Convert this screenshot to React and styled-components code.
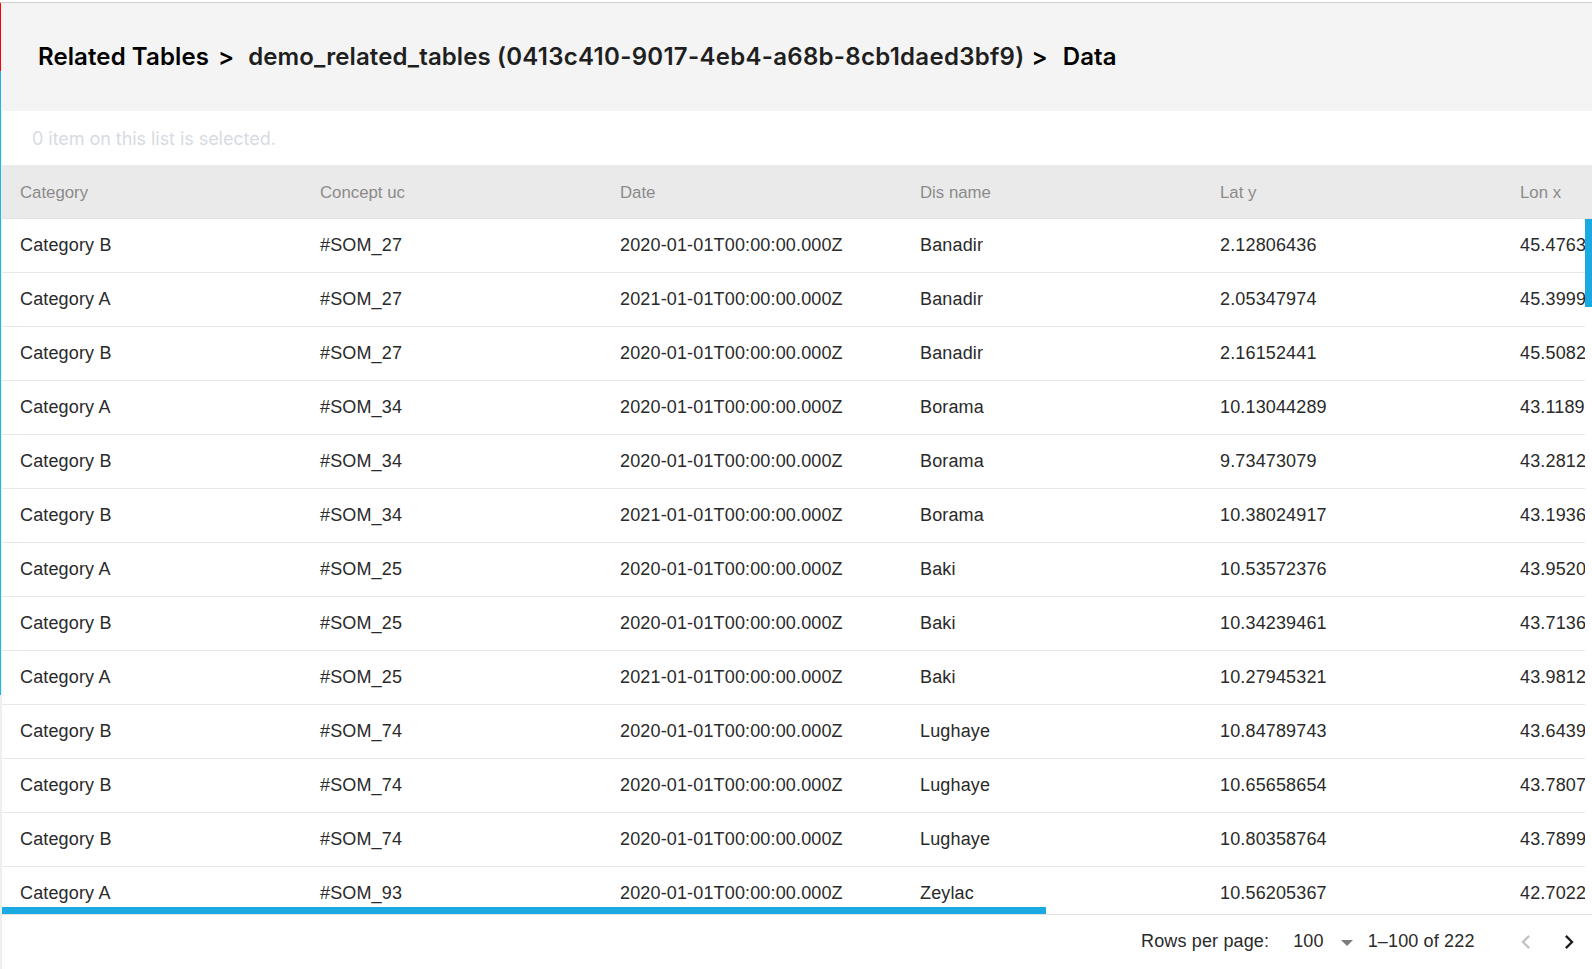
import React from 'react';
import styled, { createGlobalStyle } from 'styled-components';

const Global = createGlobalStyle`
  html, body { margin: 0; padding: 0; background: #fff; }
  body { font-family: "Liberation Sans", Arial, sans-serif; }
  * { box-sizing: border-box; }
`;

const Page = styled.div`
  position: relative;
  width: 1592px;
  height: 969px;
  padding-top: 2px;
  display: flex;
  flex-direction: column;
  overflow: hidden;
  background: #fff;
`;

const Marker = styled.div`
  position: absolute;
  left: 0;
  top: ${p => p.$top}px;
  width: 1px;
  height: ${p => p.$height}px;
  background: ${p => p.$color};
`;

const Frame = styled.div`
  flex: 1;
  min-height: 0;
  display: flex;
  flex-direction: column;
  border-left: 2px solid #eeeeee;
`;

const TitleBar = styled.header`
  flex: none;
  height: 109px;
  margin-left: -2px;
  padding-left: 38px;
  display: flex;
  align-items: center;
  background: #f4f4f4;
  border-top: 1px solid #cfcfcf;
  font-family: Inter, sans-serif;
  font-size: 24px;
  line-height: 32px;
  letter-spacing: 0.1px;
  white-space: pre;
`;

const Crumb = styled.span`
  font-weight: 600;
  color: ${p => (p.$strong ? '#000' : '#1f1f1f')};
`;

const CrumbId = styled.span`
  letter-spacing: 0.29px;
`;

const Separator = styled.span`
  font-weight: 600;
  color: #000;
  margin: 0 ${p => p.$after}px 0 ${p => p.$before}px;
`;

const SelectionNote = styled.div`
  flex: none;
  height: 54px;
  padding-left: 30px;
  display: flex;
  align-items: center;
  font-family: Inter, sans-serif;
  font-size: 18px;
  letter-spacing: -0.05px;
  color: #d6dbe3;
`;

const Table = styled.div`
  position: relative;
  flex: 1;
  min-height: 0;
  display: flex;
  flex-direction: column;
  overflow: hidden;
`;

const Row = styled.div`
  flex: none;
  display: grid;
  grid-template-columns: repeat(6, 300px);
  align-items: center;
  height: 54px;
`;

const HeadRow = styled(Row)`
  padding-top: 2px;
  background: #eaeaea;
  border-bottom: 1px solid #e2e2e2;
  color: #8a8a8a;
  font-size: 16.8px;
`;

const Body = styled.div`
  flex: 1;
  min-height: 0;
  width: 1583px;
  overflow: hidden;
`;

const DataRow = styled(Row)`
  padding-bottom: 1px;
  border-bottom: 1px solid #e8e8e8;
  color: #2a2a2a;
  font-size: 18px;
  letter-spacing: 0.15px;
`;

const Cell = styled.div`
  padding-left: 18px;
  white-space: nowrap;
`;

const HScroll = styled.div`
  position: absolute;
  left: 0;
  bottom: 0;
  width: 1044px;
  height: 7px;
  background: #1ba9e1;
`;

const VScroll = styled.div`
  position: absolute;
  right: 0;
  top: 54px;
  width: 7px;
  height: 88px;
  background: #1ba9e1;
`;

const Footer = styled.footer`
  flex: none;
  height: 55px;
  display: flex;
  align-items: center;
  border-top: 1px solid #e2e2e2;
  padding-bottom: 1px;
  font-size: 18px;
  letter-spacing: 0.15px;
  color: #2a2a2a;
`;

const RowsLabel = styled.span`
  margin-left: 1139px;
`;

const RowsValue = styled.span`
  margin-left: 24px;
  display: inline-flex;
  align-items: center;
`;

const Caret = styled.span`
  width: 0;
  height: 0;
  margin-left: 17px;
  margin-top: 3px;
  border-left: 6px solid transparent;
  border-right: 6px solid transparent;
  border-top: 6px solid #7d7d7d;
`;

const Range = styled.span`
  margin-left: 15px;
`;

const Pager = styled.svg`
  flex: none;
  width: 28px;
  height: 28px;
  margin-left: ${p => p.$gap}px;
  fill: ${p => (p.$off ? '#c4c4c4' : '#1f1f1f')};
`;

const cols = ['Category', 'Concept uc', 'Date', 'Dis name', 'Lat y', 'Lon x'];
const rows = [
  ['Category B', '#SOM_27', '2020-01-01T00:00:00.000Z', 'Banadir', '2.12806436', '45.4763'],
  ['Category A', '#SOM_27', '2021-01-01T00:00:00.000Z', 'Banadir', '2.05347974', '45.3999'],
  ['Category B', '#SOM_27', '2020-01-01T00:00:00.000Z', 'Banadir', '2.16152441', '45.5082'],
  ['Category A', '#SOM_34', '2020-01-01T00:00:00.000Z', 'Borama', '10.13044289', '43.1189'],
  ['Category B', '#SOM_34', '2020-01-01T00:00:00.000Z', 'Borama', '9.73473079', '43.2812'],
  ['Category B', '#SOM_34', '2021-01-01T00:00:00.000Z', 'Borama', '10.38024917', '43.1936'],
  ['Category A', '#SOM_25', '2020-01-01T00:00:00.000Z', 'Baki', '10.53572376', '43.9520'],
  ['Category B', '#SOM_25', '2020-01-01T00:00:00.000Z', 'Baki', '10.34239461', '43.7136'],
  ['Category A', '#SOM_25', '2021-01-01T00:00:00.000Z', 'Baki', '10.27945321', '43.9812'],
  ['Category B', '#SOM_74', '2020-01-01T00:00:00.000Z', 'Lughaye', '10.84789743', '43.6439'],
  ['Category B', '#SOM_74', '2020-01-01T00:00:00.000Z', 'Lughaye', '10.65658654', '43.7807'],
  ['Category B', '#SOM_74', '2020-01-01T00:00:00.000Z', 'Lughaye', '10.80358764', '43.7899'],
  ['Category A', '#SOM_93', '2020-01-01T00:00:00.000Z', 'Zeylac', '10.56205367', '42.7022'],
];

export default function App() {
  return (
    <Page>
      <Global />
      <Frame>
        <TitleBar>
          <Crumb $strong>Related Tables</Crumb>
          <Separator $before={9} $after={14}>&gt;</Separator>
          <Crumb>demo_related_tables <CrumbId>(0413c410-9017-4eb4-a68b-8cb1daed3bf9)</CrumbId></Crumb>
          <Separator $before={7} $after={15}>&gt;</Separator>
          <Crumb $strong>Data</Crumb>
        </TitleBar>
        <SelectionNote>0 item on this list is selected.</SelectionNote>
        <Table>
          <HeadRow>
            {cols.map(c => <Cell key={c}>{c}</Cell>)}
          </HeadRow>
          <Body>
            {rows.map((r, i) => (
              <DataRow key={i}>
                {r.map((v, j) => <Cell key={j}>{v}</Cell>)}
              </DataRow>
            ))}
          </Body>
          <HScroll />
          <VScroll />
        </Table>
        <Footer>
          <RowsLabel>Rows per page:</RowsLabel>
          <RowsValue>100<Caret /></RowsValue>
          <Range>1–100 of 222</Range>
          <Pager $off $gap={37} viewBox="0 0 24 24"><path d="M15.41 7.41 14 6l-6 6 6 6 1.41-1.41L10.83 12z" /></Pager>
          <Pager $gap={15} viewBox="0 0 24 24"><path d="M10 6 8.59 7.41 13.17 12l-4.58 4.59L10 18l6-6z" /></Pager>
        </Footer>
      </Frame>
      <Marker $top={3} $height={68} $color="#ff0000" />
      <Marker $top={71} $height={624} $color="#1ab6f0" />
    </Page>
  );
}
